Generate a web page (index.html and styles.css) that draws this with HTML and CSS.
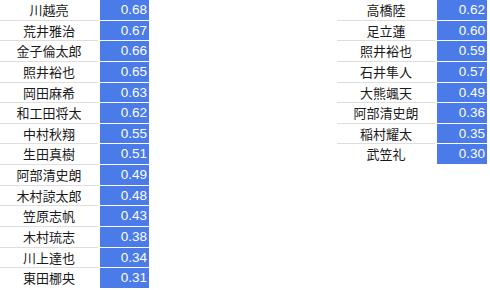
FILE: index.html
```html
<!DOCTYPE html>
<html lang="ja">
<head>
<meta charset="utf-8">
<link rel="stylesheet" href="styles.css">
</head>
<body>
<div class="page">
  <div class="table">
    <div class="row"><div class="name">川越亮</div><div class="val">0.68</div></div>
    <div class="row"><div class="name">荒井雅治</div><div class="val">0.67</div></div>
    <div class="row"><div class="name">金子倫太郎</div><div class="val">0.66</div></div>
    <div class="row"><div class="name">照井裕也</div><div class="val">0.65</div></div>
    <div class="row"><div class="name">岡田麻希</div><div class="val">0.63</div></div>
    <div class="row"><div class="name">和工田将太</div><div class="val">0.62</div></div>
    <div class="row"><div class="name">中村秋翔</div><div class="val">0.55</div></div>
    <div class="row"><div class="name">生田真樹</div><div class="val">0.51</div></div>
    <div class="row"><div class="name">阿部清史朗</div><div class="val">0.49</div></div>
    <div class="row"><div class="name">木村諒太郎</div><div class="val">0.48</div></div>
    <div class="row"><div class="name">笠原志帆</div><div class="val">0.43</div></div>
    <div class="row"><div class="name">木村琉志</div><div class="val">0.38</div></div>
    <div class="row"><div class="name">川上達也</div><div class="val">0.34</div></div>
    <div class="row"><div class="name">東田梛央</div><div class="val">0.31</div></div>
  </div>
  <div class="table right">
    <div class="row"><div class="name">高橋陸</div><div class="val">0.62</div></div>
    <div class="row"><div class="name">足立蓮</div><div class="val">0.60</div></div>
    <div class="row"><div class="name">照井裕也</div><div class="val">0.59</div></div>
    <div class="row"><div class="name">石井隼人</div><div class="val">0.57</div></div>
    <div class="row"><div class="name">大熊颯天</div><div class="val">0.49</div></div>
    <div class="row"><div class="name">阿部清史朗</div><div class="val">0.36</div></div>
    <div class="row"><div class="name">稲村耀太</div><div class="val">0.35</div></div>
    <div class="row"><div class="name">武笠礼</div><div class="val">0.30</div></div>
  </div>
</div>
</body>
</html>
```

FILE: styles.css
```css
html, body {
  margin: 0;
  padding: 0;
  background: #ffffff;
}
.page {
  display: flex;
  justify-content: space-between;
  align-items: flex-start;
  width: 487px;
}
.table {
  display: flex;
  flex-direction: column;
  width: 149px;
}
.table.right {
  width: 150px;
}
.row {
  display: grid;
  grid-template-columns: 98px 1fr;
  column-gap: 2px;
  height: 20.64px;
}
.name {
  font-family: "Noto Sans CJK JP", sans-serif;
  font-size: 13px;
  color: #1a1a1a;
  text-align: center;
  line-height: 19.64px;
  border-bottom: 1px solid #dedede;
}
.row:last-child .name {
  border-bottom: none;
}
.val {
  background: #4a7be8;
  color: #fff;
  font-family: "Liberation Sans", Arial, sans-serif;
  font-size: 13.5px;
  text-align: right;
  padding-right: 2px;
  line-height: 19.64px;
  height: 19.64px;
}
```
